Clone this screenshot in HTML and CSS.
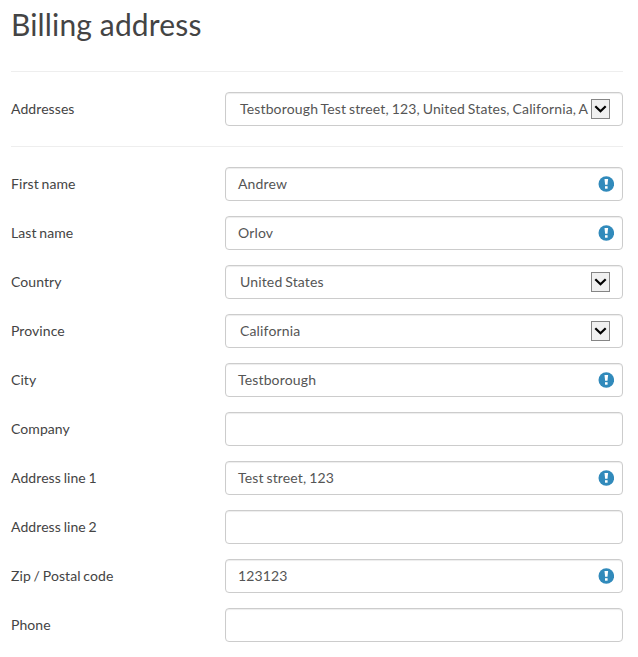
FILE: index.html
```html
<!DOCTYPE html>
<html lang="en">
<head>
<meta charset="utf-8">
<title>Billing address</title>
<link rel="stylesheet" href="styles.css">
</head>
<body>
<svg class="sprite" aria-hidden="true">
  <symbol id="info" viewBox="0 0 16 16"><circle cx="8.3" cy="8" r="7.8" fill="#318abb"/><path d="M6.5 3h3.6l-.6 5.8H7.1z" fill="#fff"/><path d="M7 10.2h2.6v2.5H7z" fill="#fff"/></symbol>
  <symbol id="arrow" viewBox="0 0 19 20"><path d="M0 0h19v20H0z" fill="#858585"/><path d="M1 1h17v18H1z" fill="#f0f0f0"/><path d="M4.3 7.2l5.2 5.1 5.2-5.1" fill="none" stroke="#000" stroke-width="2.2"/></symbol>
</svg>
<main class="billing">
  <h1>Billing address</h1>
  <section class="saved">
    <div class="row"><span class="label">Addresses</span><div class="field select"><span class="value">Testborough Test street, 123, United States, California, A</span><svg class="arrow"><use href="#arrow"/></svg></div></div>
  </section>
  <section class="details">
    <div class="row"><span class="label">First name</span><div class="field"><span class="value">Andrew</span><svg class="info"><use href="#info"/></svg></div></div>
    <div class="row"><span class="label">Last name</span><div class="field"><span class="value">Orlov</span><svg class="info"><use href="#info"/></svg></div></div>
    <div class="row"><span class="label">Country</span><div class="field select"><span class="value">United States</span><svg class="arrow"><use href="#arrow"/></svg></div></div>
    <div class="row"><span class="label">Province</span><div class="field select"><span class="value">California</span><svg class="arrow"><use href="#arrow"/></svg></div></div>
    <div class="row"><span class="label">City</span><div class="field"><span class="value">Testborough</span><svg class="info"><use href="#info"/></svg></div></div>
    <div class="row"><span class="label">Company</span><div class="field"></div></div>
    <div class="row"><span class="label">Address line 1</span><div class="field"><span class="value">Test street, 123</span><svg class="info"><use href="#info"/></svg></div></div>
    <div class="row"><span class="label">Address line 2</span><div class="field"></div></div>
    <div class="row"><span class="label">Zip / Postal code</span><div class="field"><span class="value">123123</span><svg class="info"><use href="#info"/></svg></div></div>
    <div class="row"><span class="label">Phone</span><div class="field"></div></div>
  </section>
</main>
</body>
</html>
```
FILE: styles.css
```css
* { box-sizing: border-box; }
body { margin: 0; background: #fff; color: #444; font: 14px/20px Lato, sans-serif; }
.sprite { display: none; }
.billing { padding: 8px 15px 0 11px; }
h1 { margin: 0; height: 63px; font-size: 30px; line-height: 32px; font-weight: 400; letter-spacing: .15px; }
.saved, .details { border-top: 1px solid #eee; padding-top: 20px; }
.saved { height: 75px; }
.details { display: grid; gap: 15px; }
.row { display: grid; grid-template-columns: 214px 1fr; height: 34px; align-items: center; }
.label { letter-spacing: .08px; word-spacing: -.9px; }
.field { display: flex; align-items: center; justify-content: space-between; height: 34px; padding: 0 8px 0 12px; border: 1px solid #ccc; border-radius: 4px; box-shadow: inset 0 1px 1px rgba(0, 0, 0, .075); color: #555; }
.select { padding: 0 12px 0 14px; }
.value { white-space: nowrap; letter-spacing: .15px; word-spacing: -.9px; }
.info { width: 16px; height: 16px; flex: none; }
.arrow { width: 19px; height: 20px; flex: none; }
```
